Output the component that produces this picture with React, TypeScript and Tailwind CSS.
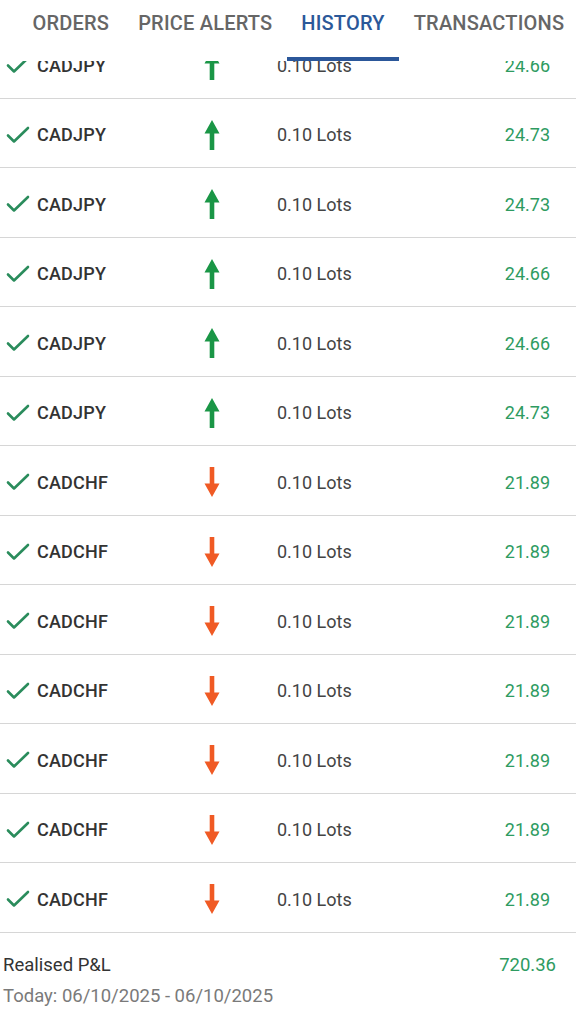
import React from 'react';

type Trade = {
  symbol: string;
  side: 'buy' | 'sell';
  lots: string;
  pnl: string;
};

const trades: Trade[] = [
  { symbol: 'CADJPY', side: 'buy', lots: '0.10 Lots', pnl: '24.66' },
  { symbol: 'CADJPY', side: 'buy', lots: '0.10 Lots', pnl: '24.73' },
  { symbol: 'CADJPY', side: 'buy', lots: '0.10 Lots', pnl: '24.73' },
  { symbol: 'CADJPY', side: 'buy', lots: '0.10 Lots', pnl: '24.66' },
  { symbol: 'CADJPY', side: 'buy', lots: '0.10 Lots', pnl: '24.66' },
  { symbol: 'CADJPY', side: 'buy', lots: '0.10 Lots', pnl: '24.73' },
  { symbol: 'CADCHF', side: 'sell', lots: '0.10 Lots', pnl: '21.89' },
  { symbol: 'CADCHF', side: 'sell', lots: '0.10 Lots', pnl: '21.89' },
  { symbol: 'CADCHF', side: 'sell', lots: '0.10 Lots', pnl: '21.89' },
  { symbol: 'CADCHF', side: 'sell', lots: '0.10 Lots', pnl: '21.89' },
  { symbol: 'CADCHF', side: 'sell', lots: '0.10 Lots', pnl: '21.89' },
  { symbol: 'CADCHF', side: 'sell', lots: '0.10 Lots', pnl: '21.89' },
  { symbol: 'CADCHF', side: 'sell', lots: '0.10 Lots', pnl: '21.89' },
];

const tabs = ['ORDERS', 'PRICE ALERTS', 'HISTORY', 'TRANSACTIONS'];

const CheckIcon = () => (
  <svg width="24" height="24" viewBox="0 0 24 24" fill="none">
    <path d="M2 12.5l6 6L22 5" stroke="#2a8c5c" strokeWidth="2.6" strokeLinecap="round" strokeLinejoin="round" />
  </svg>
);

const ArrowUp = () => (
  <svg width="18" height="30" viewBox="0 0 18 30">
    <path d="M9 0L16.5 13.5H11.3V30H6.7V13.5H1.5Z" fill="#1a9646" />
  </svg>
);

const ArrowDown = () => (
  <svg width="18" height="30" viewBox="0 0 18 30">
    <path d="M6.7 0H11.3V16.5H16.5L9 30L1.5 16.5H6.7Z" fill="#f05a24" />
  </svg>
);

const TradeRow: React.FC<{ trade: Trade }> = ({ trade }) => (
  <div className="flex h-[69.5px] items-center border-b-[1.5px] border-[#d6d6d6] pt-[4px]">
    <div className="flex w-[37px] justify-start pl-[6px]">
      <CheckIcon />
    </div>
    <div className="w-[150px] text-[18px] font-medium tracking-[0.2px] text-[#333333]">{trade.symbol}</div>
    <div className="flex w-[50px] justify-center">
      {trade.side === 'buy' ? <ArrowUp /> : <ArrowDown />}
    </div>
    <div className="ml-[40px] text-[18px] text-[#444444]">{trade.lots}</div>
    <div className="flex-1 pr-[26px] text-right text-[18px] text-[#2e9b61]">{trade.pnl}</div>
  </div>
);

export default function App() {
  return (
    <div className="h-[1024px] w-[576px] overflow-hidden bg-white font-['Roboto',sans-serif]">
      <div className="relative z-10 flex h-[61px] items-stretch bg-white">
        <div className="mt-[10px] mr-[18px] h-[26px] w-[3px] rounded-sm bg-[#9a9a9a]" />
        {tabs.map((tab) => {
          const active = tab === 'HISTORY';
          return (
            <div key={tab} className="flex shrink-0 flex-col justify-between pt-[11px]">
              <span
                className={
                  active
                    ? 'whitespace-nowrap px-[14.5px] text-[20px] leading-[24px] font-medium tracking-[0.2px] text-[#2b5899]'
                    : 'whitespace-nowrap px-[14.5px] text-[20px] leading-[24px] font-medium tracking-[0.2px] text-[#666666]'
                }
              >
                {tab}
              </span>
              <div className={active ? 'h-[4px] bg-[#2b579a]' : 'h-[4px]'} />
            </div>
          );
        })}
      </div>

      <div className="mt-[-32px]">
        {trades.map((t, i) => (
          <TradeRow key={i} trade={t} />
        ))}
      </div>

      <div className="pt-[20px] pl-[3px] pr-[20px]">
        <div className="flex justify-between text-[18.5px] leading-[24px]">
          <span className="text-[#333333]">Realised P&amp;L</span>
          <span className="text-[#2e9b61]">720.36</span>
        </div>
        <div className="mt-[7px] text-[18.5px] leading-[24px] text-[#7a7a7a]">Today: 06/10/2025 - 06/10/2025</div>
      </div>
    </div>
  );
}
